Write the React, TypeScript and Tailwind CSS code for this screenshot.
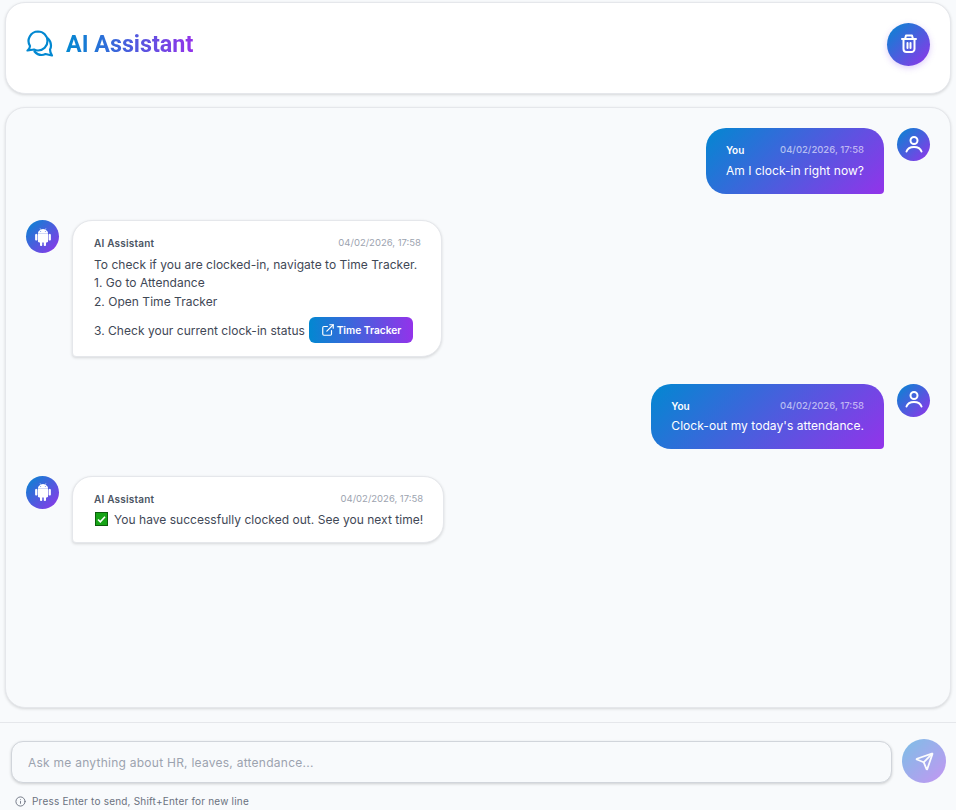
import React from 'react';
import { ExternalLink, Info, Send } from 'lucide-react';
import { BsAndroid2 } from 'react-icons/bs';

const gradient = 'bg-[linear-gradient(135deg,#0288d1,#9333ea)]';

function ChatIcon() {
  return (
    <svg width="28" height="28" viewBox="0 0 28 28" fill="none" stroke="#0288d1" strokeWidth="2.2" strokeLinecap="round" strokeLinejoin="round">
      <path d="M12 1.5a9.5 9.5 0 0 1 0 19q-2 0-4-1L1.5 20.5q2.5-2 2.5-4.500A9.500 9.500 0 0 1 12 1.500z" />
      <path d="M22 8.500a10 10 0 0 1 3 7q0 2.500-1 4q0 3 2 6l-6.500-1.500q-2 1-4 1q-4 0-7-3.500" />
    </svg>
  );
}

function TrashIcon() {
  return (
    <svg width="20" height="20" viewBox="0 0 20 20" fill="none" stroke="currentColor" strokeWidth="2" strokeLinecap="round" strokeLinejoin="round">
      <path d="M3 5h14" />
      <path d="M6 5l1-3.500h6L14 5" />
      <path d="M4.500 5v10a3 3 0 0 0 3 3h5a3 3 0 0 0 3-3V5" />
      <path d="M8.500 9v5M11.500 9v5" />
    </svg>
  );
}

function UserIcon() {
  return (
    <svg width="20" height="20" viewBox="0 0 20 20" fill="none" stroke="currentColor" strokeWidth="2" strokeLinecap="round">
      <circle cx="10" cy="5.500" r="3.500" />
      <path d="M2.500 16.500C3.500 13.500 6.500 12 10 12s6.500 1.500 7.500 4.500" />
    </svg>
  );
}

function CheckBox() {
  return (
    <svg width="13" height="14" viewBox="0 0 13 14" className="mr-[6px] ml-[1px] shrink-0">
      <rect x="0.500" y="0.500" width="12" height="13" fill="#16a416" stroke="#0c5c0c" />
      <path d="M3 7.500l2.300 2.300 4.700-5" fill="none" stroke="#fff" strokeWidth="1.600" />
    </svg>
  );
}

function UserBubble({ time, text }: { time: string; text: string }) {
  return (
    <div className="flex justify-end gap-[13px]">
      <div className={`${gradient} rounded-[20px] rounded-br-[4px] px-5 pt-[14px] pb-[14px] text-white`}>
        <div className="mb-[2.5px] flex items-center justify-between gap-4 text-[10px] leading-[16px]">
          <span className="font-semibold">You</span>
          <span className="text-[9.5px] font-medium text-white/60">{time}</span>
        </div>
        <p className="text-[12px] leading-[19px] tracking-[0.05px]">{text}</p>
      </div>
      <div className={`${gradient} flex h-[33px] w-[33px] shrink-0 items-center justify-center rounded-full text-white`}>
        <UserIcon />
      </div>
    </div>
  );
}

function BotBubble({ time, width, children }: { time: string; width?: string; children: React.ReactNode }) {
  return (
    <div className="flex justify-start gap-[13px]">
      <div className={`${gradient} flex h-[33px] w-[33px] shrink-0 items-center justify-center rounded-full text-white`}>
        <BsAndroid2 size={18} />
      </div>
      <div className={`${width ?? ''} rounded-[20px] rounded-bl-[4px] border border-[#e5e7eb] bg-white pt-[14px] pr-5 pb-[13px] pl-[21px] shadow-[0_1px_3px_rgba(0,0,0,0.14)]`}>
        <div className="mb-[4px] flex items-center justify-between gap-4 text-[9.5px] leading-[16px]">
          <span className="text-[10px] font-semibold tracking-[0.2px] text-[#4b5563]">AI Assistant</span>
          <span className="text-[#9ca3af]">{time}</span>
        </div>
        <div className="text-[12px] leading-[19px] tracking-[0.03px] text-[#3f4856]">{children}</div>
      </div>
    </div>
  );
}

export default function App() {
  return (
    <div className="flex h-[810px] w-[956px] flex-col overflow-hidden bg-[#f8fafc] font-['Inter',sans-serif]">
      <div className="flex flex-col gap-[13px] px-[5px] pt-[2px]">
        <header className="flex h-[92px] items-center justify-between rounded-[20px] border border-[#e5e7eb] bg-white px-5 pb-[8px] shadow-[0_1px_3px_rgba(0,0,0,0.14)]">
          <div className="flex items-center gap-[12px]">
            <ChatIcon />
            <h1 className="bg-[linear-gradient(90deg,#0288d1,#9333ea)] bg-clip-text font-['Roboto',sans-serif] text-[23.3px] font-bold text-transparent">
              AI Assistant
            </h1>
          </div>
          <button className={`${gradient} flex h-[43px] w-[43px] items-center justify-center rounded-full text-white shadow-[0_2px_6px_rgba(124,58,237,0.25)]`}>
            <TrashIcon />
          </button>
        </header>

        <main className="flex h-[601px] flex-col gap-[26.5px] rounded-[20px] border border-[#e5e7eb] bg-[#f8fafc] px-5 py-5 shadow-[0_1px_3px_rgba(0,0,0,0.14)]">
          <UserBubble time="04/02/2026, 17:58" text="Am I clock-in right now?" />
          <BotBubble time="04/02/2026, 17:58" width="w-[370px]">
            <p>To check if you are clocked-in, navigate to Time Tracker.</p>
            <p className="-mt-[1px]">1. Go to Attendance</p>
            <p>2. Open Time Tracker</p>
            <p className="mt-[6px] flex items-center gap-1">
              3. Check your current clock-in status
              <a className="flex h-[26px] w-[104px] items-center justify-center gap-[2px] rounded-[6px] bg-[linear-gradient(90deg,#0288d1,#9333ea)] text-[10.2px] font-semibold tracking-normal text-white">
                <ExternalLink size={14} />
                Time Tracker
              </a>
            </p>
          </BotBubble>
          <UserBubble time="04/02/2026, 17:58" text="Clock-out my today's attendance." />
          <BotBubble time="04/02/2026, 17:58">
            <p className="-mt-[1px] flex items-center">
              <CheckBox />
              You have successfully clocked out. See you next time!
            </p>
          </BotBubble>
        </main>
      </div>

      <footer className="mt-[14px] border-t border-[#e5e7eb] pt-4 pr-[10px] pl-[11px]">
        <div className="flex items-end gap-[10px]">
          <input
            placeholder="Ask me anything about HR, leaves, attendance..."
            className="h-[42px] flex-1 rounded-[12px] border border-[#d1d5db] bg-[#f8fafc] px-4 text-[12px] tracking-[0.25px] shadow-[0_1px_3px_rgba(0,0,0,0.18)] outline-none placeholder:text-[#9ca3af]"
          />
          <button className={`${gradient} flex h-[44px] w-[44px] items-center justify-center rounded-full text-white opacity-50`}>
            <Send size={19} strokeWidth={2.25} />
          </button>
        </div>
        <div className="mt-[11px] flex items-center gap-[6px] pl-1 text-[10px] tracking-[0.2px] text-[#6b7280]">
          <Info size={11} />
          Press Enter to send, Shift+Enter for new line
        </div>
      </footer>
    </div>
  );
}
